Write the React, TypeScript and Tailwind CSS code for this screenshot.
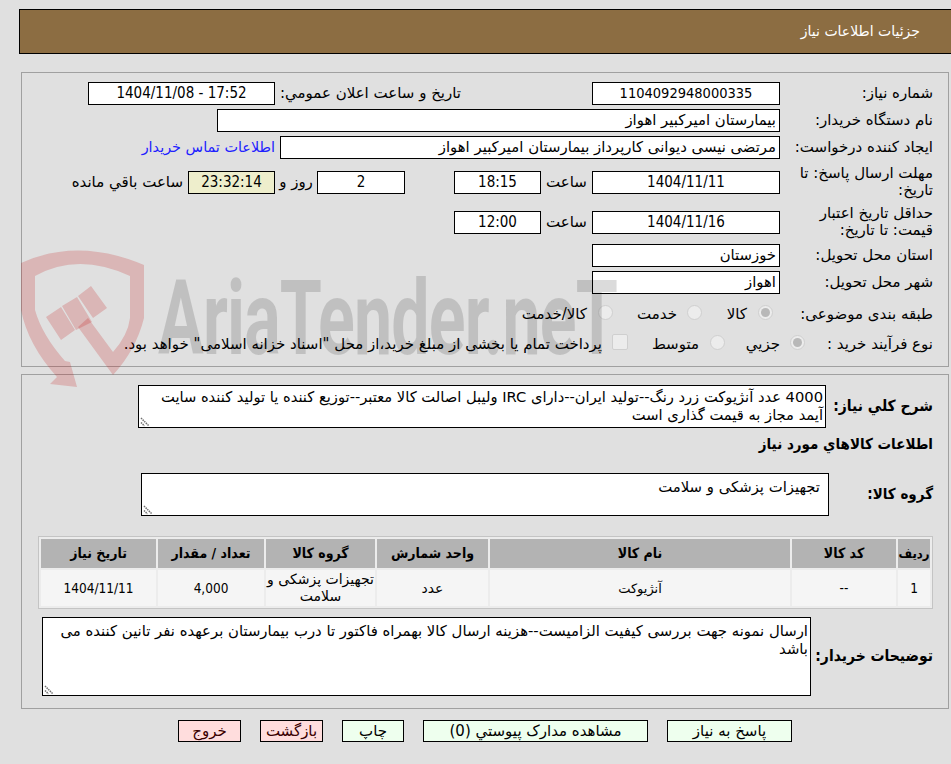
import type { ReactNode } from 'react'

const numFont = "font-['DejaVu_Sans_Condensed','DejaVu_Sans',sans-serif]"

function Field({ children, className = '', num = false }: { children?: ReactNode; className?: string; num?: boolean }) {
  return (
    <div className={`h-[23px] shrink-0 bg-white border border-black leading-[21px] whitespace-nowrap overflow-hidden ${num ? `text-center ${numFont}` : 'text-right pr-[3px] text-[14.85px]'} ${className}`}>
      {children}
    </div>
  )
}

function Label({ children, className = 'w-[153px]' }: { children: ReactNode; className?: string }) {
  return <div className={`shrink-0 text-[15px] leading-[17px] text-black ${className}`}>{children}</div>
}

function Radio({ checked = false }: { checked?: boolean }) {
  return (
    <span className="w-[15px] h-[15px] -mt-[5px] rounded-full border border-[#cfcfcf] bg-[#ececec] flex items-center justify-center shrink-0">
      {checked && <span className="w-[9px] h-[9px] rounded-full bg-[#b8b8b8]" />}
    </span>
  )
}

// textarea با گوشه resize
function Area({ children, className = '' }: { children?: ReactNode; className?: string }) {
  return (
    <div className={`relative shrink-0 bg-white border border-black leading-[18px] ${className}`}>
      {children}
      <svg className="absolute left-[1px] bottom-[0px]" width="11" height="11" viewBox="0 0 11 11">
        <path d="M1 2 L9 10 M1 6.5 L4.5 10" stroke="#707070" strokeWidth="1.5" strokeDasharray="1.5 0.8" fill="none" />
      </svg>
    </div>
  )
}

function Btn({ children, red = false, className = '' }: { children: ReactNode; red?: boolean; className?: string }) {
  return (
    <div className={`h-[22px] border border-black text-center text-[15px] leading-[20px] ${red ? 'bg-[#ffdddd] text-[#3a0000]' : 'bg-[#eeffee]'} ${className}`}>
      {children}
    </div>
  )
}

const Th = ({ children, className = 'text-[14px]' }: { children: ReactNode; className?: string }) => (
  <div className={`bg-[#b3b3b3] flex items-center justify-center font-bold ${numFont} ${className}`}>{children}</div>
)
const Td = ({ children, className = 'text-[14px]' }: { children: ReactNode; className?: string }) => (
  <div className={`bg-[#f5f5f5] flex items-center justify-center text-center leading-[17px] ${className}`}>{children}</div>
)

export default function App() {
  return (
    <div dir="rtl" className="font-['DejaVu_Sans',sans-serif] relative w-[951px] h-[764px] overflow-hidden bg-[#e0e0e0] text-black">
      <div className="pt-[9px]">
        <div className="h-[45px] ml-[19px] flex items-center bg-[#8c6d42] border border-black border-r-0 text-white text-[14px] pr-[31px] pb-[1px]">
          جزئیات اطلاعات نیاز
        </div>

        {/* اطلاعات اصلی */}
        <div className="mt-[18px] mr-[2px] ml-[21px] h-[295px] border border-[#a0a0a0] pt-[9px] pr-[15px]">
          <div className="flex items-center h-[23px]">
            <Label>شماره نیاز:</Label>
            <Field num className="w-[188px] text-[14.5px]">1104092948000335</Field>
            <div className="w-[131px] shrink-0" />
            <div className="w-[186px] shrink-0 text-[15px] whitespace-nowrap">تاریخ و ساعت اعلان عمومي:</div>
            <Field num className="w-[187px] text-[15px]"><span dir="ltr">1404/11/08 - 17:52</span></Field>
          </div>
          <div className="flex items-center h-[23px] mt-[4px]">
            <Label>نام دستگاه خریدار:</Label>
            <Field className="w-[563px]">بیمارستان امیرکبیر اهواز</Field>
          </div>
          <div className="flex items-center h-[23px] mt-[4px]">
            <Label>ایجاد کننده درخواست:</Label>
            <Field className="w-[500px]">مرتضی نیسی دیوانی کارپرداز بیمارستان امیرکبیر اهواز</Field>
            <div className="mr-[5px] text-[14.4px] text-[#2020ff] whitespace-nowrap">اطلاعات تماس خریدار</div>
          </div>
          <div className="flex items-center mt-[4px] h-[38px]">
            <Label>مهلت ارسال پاسخ: تا تاریخ:</Label>
            <Field num className="w-[188px] text-[15px]">1404/11/11</Field>
            <div className="w-[51px] shrink-0 text-center text-[15px]">ساعت</div>
            <Field num className="w-[87px] text-[15px]">18:15</Field>
            <div className="w-[49px] shrink-0" />
            <Field num className="w-[88px] text-[15px]">2</Field>
            <div className="w-[42px] shrink-0 text-center text-[15px]">روز و</div>
            <Field num className="w-[87px] text-[15px] !bg-[#eeeecc]">23:32:14</Field>
            <div className="mr-[5px] text-[15px] whitespace-nowrap">ساعت باقي مانده</div>
          </div>
          <div className="flex items-center mt-[2px] h-[38px]">
            <Label>حداقل تاریخ اعتبار قیمت: تا تاریخ:</Label>
            <Field num className="w-[188px] text-[15px]">1404/11/16</Field>
            <div className="w-[51px] shrink-0 text-center text-[15px]">ساعت</div>
            <Field num className="w-[87px] text-[15px]">12:00</Field>
          </div>
          <div className="flex items-center h-[23px] mt-[3px]">
            <Label>استان محل تحویل:</Label>
            <Field className="w-[188px]">خوزستان</Field>
          </div>
          <div className="flex items-center h-[23px] mt-[4px]">
            <Label>شهر محل تحویل:</Label>
            <Field className="w-[188px]">اهواز</Field>
          </div>
          <div className="flex items-center h-[23px] mt-[9px] text-[15px]">
            <Label>طبقه بندی موضوعی:</Label>
            <div className="w-[7px] shrink-0" />
            <Radio checked />
            <span className="w-[11px] shrink-0" />
            <span className="w-[45px] shrink-0">کالا</span>
            <Radio />
            <span className="w-[10px] shrink-0" />
            <span className="w-[64px] shrink-0">خدمت</span>
            <Radio />
            <span className="w-[11px] shrink-0" />
            <span className="whitespace-nowrap">کالا/خدمت</span>
          </div>
          <div className="flex items-center h-[23px] mt-[7px] text-[15px]">
            <Label className="w-[128px]">نوع فرآیند خرید :</Label>
            <Radio checked />
            <span className="w-[10px] shrink-0" />
            <span className="w-[55px] shrink-0">جزيي</span>
            <Radio />
            <span className="w-[11px] shrink-0" />
            <span className="w-[71px] shrink-0">متوسط</span>
            <span className="w-[16px] h-[16px] -mt-[5px] shrink-0 border border-[#cfcfcf] bg-[#ececec] rounded-[2px] ml-[10px]" />
            <span className="whitespace-nowrap">پرداخت تمام یا بخشی از مبلغ خرید،از محل "اسناد خزانه اسلامی" خواهد بود.</span>
          </div>
        </div>

        {/* شرح و کالاها */}
        <div className="mt-[7px] mr-[2px] ml-[21px] h-[335px] border border-[#a0a0a0] pt-[10px] pr-[15px]">
          <div className="flex items-center">
            <div className={`w-[107px] shrink-0 font-bold text-[15.5px] whitespace-nowrap ${numFont}`}>شرح کلي نیاز:</div>
            <Area className="w-[688px] h-[43px] text-right text-[14.7px] px-[2px] pt-[2px]">
              4000 عدد آنژیوکت زرد رنگ--تولید ایران--دارای IRC ولیبل اصالت کالا معتبر--توزیع کننده یا تولید کننده سایت آیمد مجاز به قیمت گذاری است
            </Area>
          </div>
          <div className={`font-bold text-[15px] mt-[6px] leading-[20px] ${numFont}`}>اطلاعات کالاهاي مورد نیاز</div>
          <div className="flex items-center mt-[19px]">
            <div className={`w-[104px] shrink-0 font-bold text-[15px] ${numFont}`}>گروه کالا:</div>
            <Area className="w-[688px] h-[43px] text-[14.85px] pr-[8px] pt-[4px]">تجهیزات پزشکی و سلامت</Area>
          </div>
          <div className="mt-[20px] ml-[16px] border border-[#c4c4c4] p-[2px] bg-[#ececec] grid grid-cols-[32px_104px_300px_111px_109px_106px_115px] gap-[2px] grid-rows-[29px_36px]">
            <Th className="text-[13px]">ردیف</Th>
            <Th>کد کالا</Th>
            <Th>نام کالا</Th>
            <Th>واحد شمارش</Th>
            <Th>گروه کالا</Th>
            <Th>تعداد / مقدار</Th>
            <Th>تاریخ نیاز</Th>
            <Td className={`text-[13.5px] ${numFont}`}>1</Td>
            <Td className={`text-[13.5px] ${numFont}`}>--</Td>
            <Td className="text-[13px]">آنژیوکت</Td>
            <Td>عدد</Td>
            <Td>تجهیزات پزشکی و سلامت</Td>
            <Td className={`text-[13.5px] ${numFont}`}>4,000</Td>
            <Td className={`text-[13.5px] ${numFont}`}>1404/11/11</Td>
          </div>
          <div className="flex items-center mt-[8px]">
            <div className={`w-[122px] shrink-0 font-bold text-[15.5px] whitespace-nowrap ${numFont}`}>توضیحات خریدار:</div>
            <Area className="w-[769px] h-[79px] text-[14.85px] px-[2px] pt-[4px]">ارسال نمونه جهت بررسی کیفیت الزامیست--هزینه ارسال کالا بهمراه فاکتور تا درب بیمارستان برعهده نفر تانین کننده می باشد</Area>
          </div>
        </div>

        <div className="flex mt-[11px] pr-[159px] gap-[19px]">
          <Btn className="w-[125px]">پاسخ به نیاز</Btn>
          <Btn className="w-[225px] tracking-[0.3px]">مشاهده مدارک پیوستي (0)</Btn>
          <Btn className="w-[62px]">چاپ</Btn>
          <Btn red className="w-[63px]">بازگشت</Btn>
          <Btn red className="w-[63px]">خروج</Btn>
        </div>
      </div>

      {/* واترمارک نیمه‌شفاف روی صفحه */}
      <div className="absolute left-0 top-0 pointer-events-none" dir="ltr">
        <svg className="absolute left-[15px] top-[240px]" width="135" height="150" viewBox="15 240 135 150">
          <path
            fill="#bd0000"
            fillOpacity="0.19"
            d="M21 263 Q78 237 144 265 L144 318 Q136 350 113 375 L78 327 L88 318 L113 352 Q128 335 130 318 L130 276 Q78 252 35 276 L35 310 Q42 335 65 361 L70 362 L77 387 L50 384 L57 377 Q28 345 21 310 Z"
          />
          <path fill="#bd0000" fillOpacity="0.19" d="M46 317 L61 307 L75 330 L61 340 Z M62 306 L77 297 L92 322 L76 330 Z M78 296 L91 286 L107 308 L93 318 Z" />
        </svg>
        <div className="absolute left-[158px] top-[273px] origin-left scale-x-[0.83] scale-y-[1.27] text-black/[0.14] font-bold text-[82px] leading-[90px] whitespace-nowrap font-['Roboto',sans-serif] tracking-[-1px]">
          AriaTender.neT
        </div>
      </div>
    </div>
  )
}
